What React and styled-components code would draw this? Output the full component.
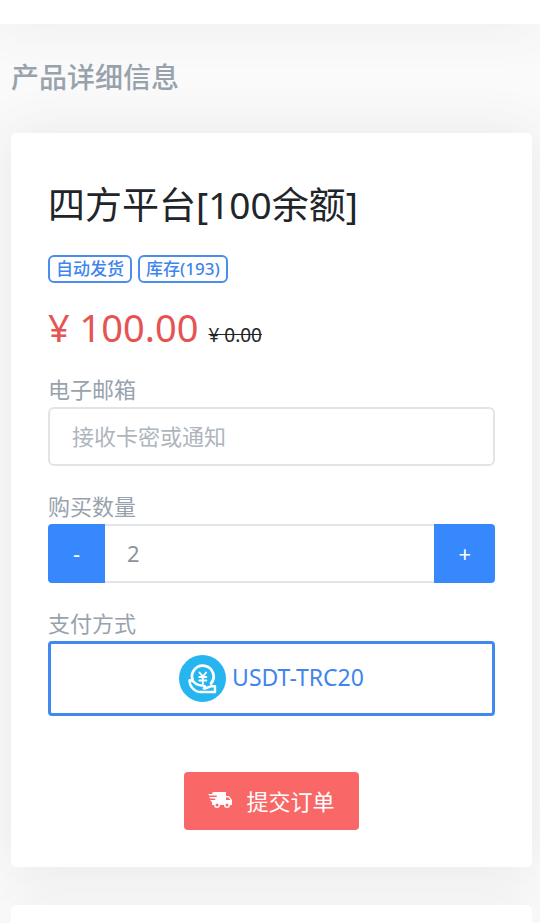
import React, { useState } from "react";
import styled, { createGlobalStyle } from "styled-components";

const GlobalStyle = createGlobalStyle`
  *, *::before, *::after { box-sizing: border-box; }
  body {
    margin: 0;
    background: #fafafa;
    color: #212529;
    font-family: "Noto Sans", "Noto Sans CJK SC", sans-serif;
    font-size: 22px;
    font-weight: 400;
    overflow-x: hidden;
  }
  button, input { font: inherit; }
`;

const shadow = "0 0 50px rgba(84, 84, 84, 0.11)";

const TopBar = styled.header`
  height: 24px;
  background: #fff;
  box-shadow: ${shadow};
`;

const Page = styled.main`
  padding: 0 8px 0 11px;
`;

const PageTitle = styled.h4`
  margin: 0;
  padding-bottom: 2px;
  font-size: 28px;
  font-weight: 500;
  line-height: 107px;
  color: #98a2ad;
`;

const Card = styled.section`
  padding: 37px;
  border-radius: 5px;
  background: #fff;
  box-shadow: ${shadow};
`;

const NextCard = styled.section`
  height: 18px;
  margin-top: 38px;
  border-radius: 5px 5px 0 0;
  background: #fff;
  box-shadow: ${shadow};
`;

const ProductName = styled.h3`
  margin: 13px 0 29px;
  font-size: 37px;
  font-weight: 400;
  line-height: 43px;
`;

const Badges = styled.div`
  display: flex;
  gap: 6px;
`;

const Badge = styled.span`
  padding: 0 6px;
  border: 2px solid #4a8cf0;
  border-radius: 6px;
  font-size: 17px;
  font-weight: 550;
  line-height: 24px;
  color: #3f85ee;
`;

const Prices = styled.div`
  display: flex;
  align-items: baseline;
  gap: 10px;
  margin: 19px 0 12px;
  line-height: 50px;
`;

const Price = styled.span`
  font-size: 38px;
  color: #e55353;
`;

const OldPrice = styled.del`
  font-size: 19px;
`;

const Field = styled.div`
  margin-bottom: 23px;
`;

const Label = styled.label`
  display: block;
  line-height: 35px;
  color: #98a2ad;
`;

const TextInput = styled.input`
  display: block;
  width: 100%;
  min-width: 0;
  height: 59px;
  padding: 0 22px 2px;
  border: 2px solid #e2e4e7;
  border-radius: ${(p) => (p.$joined ? "0" : "6px")};
  border-width: ${(p) => (p.$joined ? "2px 0" : "2px")};
  background: #fff;
  color: #8c9399;
  outline: none;
  &::placeholder { color: #adb5bd; opacity: 1; }
`;

const Stepper = styled.div`
  display: flex;
  border-radius: 4px;
  overflow: hidden;
`;

const StepButton = styled.button`
  flex: none;
  min-width: 57px;
  padding: 0 24px 2px;
  border: 0;
  background: #3688fc;
  color: #fff;
`;

const PayOption = styled.button`
  display: flex;
  align-items: center;
  justify-content: center;
  gap: 6px;
  width: 100%;
  height: 75px;
  padding: 0;
  border: 3px solid #4189ee;
  border-radius: 4px;
  background: #fff;
  font-size: 23px;
  line-height: 32px;
  color: #3f85ee;
`;

const PayName = styled.span`
  padding-bottom: 4px;
`;

const Actions = styled.div`
  display: flex;
  justify-content: center;
  margin-top: 56px;
`;

const SubmitButton = styled.button`
  display: flex;
  align-items: center;
  gap: 14px;
  height: 58px;
  padding: 0 24px 2px;
  border: 0;
  border-radius: 4px;
  background: #fa6767;
  color: #fff;
`;

function CoinHandIcon() {
  return (
    <svg width="47" height="47" viewBox="0 0 47 47" fill="none" aria-hidden="true">
      <circle cx="23.5" cy="23.5" r="23.5" fill="#27b5f0" />
      <path
        d="M13.600 25A10.800 10.800 0 1 1 32 28.500"
        stroke="#fff"
        strokeWidth="2.8"
        strokeLinecap="round"
      />
      <path
        d="M20.500 17.500l3.300 4 3.300-4M20.300 22h7M20.300 25.500h7M23.800 21.500v7.500"
        stroke="#fff"
        strokeWidth="1.9"
        strokeLinecap="round"
      />
      <path
        d="M10.500 25.200c2.500 0 4 1 5.500 2.800 1.800 2 4.500 2.400 8.500 2.800 2.200.300 2.300 2.200.300 2.700M10.500 25.200c-.300 5 4.500 11.800 11 11.800H36V31.200h-3.500L26 33.500"
        stroke="#fff"
        strokeWidth="2.4"
        strokeLinejoin="round"
        strokeLinecap="round"
      />
    </svg>
  );
}

function TruckFastIcon() {
  return (
    <svg width="24" height="24" viewBox="0 0 24 24" fill="currentColor" aria-hidden="true">
      <path d="M3,13.5L2.25,12H7.5L6.9,10.5H2L1.25,9H9.05L8.45,7.5H1.11L0.25,6H4A2,2 0 0,1 6,4H18V8H21L24,12V17H22A3,3 0 0,1 19,20A3,3 0 0,1 16,17H12A3,3 0 0,1 9,20A3,3 0 0,1 6,17H4V13.5H3M19,18.5A1.5,1.5 0 0,0 20.5,17A1.5,1.5 0 0,0 19,15.5A1.5,1.5 0 0,0 17.5,17A1.5,1.5 0 0,0 19,18.5M20.5,9.5H18V12H22.46L20.5,9.5M9,18.5A1.5,1.5 0 0,0 10.5,17A1.5,1.5 0 0,0 9,15.5A1.5,1.5 0 0,0 7.5,17A1.5,1.5 0 0,0 9,18.5Z" />
    </svg>
  );
}

export default function App() {
  const [quantity, setQuantity] = useState(2);
  const step = (n) => setQuantity((q) => Math.max(1, Number(q) + n));

  return (
    <>
      <GlobalStyle />
      <TopBar />
      <Page>
        <PageTitle>产品详细信息</PageTitle>
        <Card as="form" onSubmit={(e) => e.preventDefault()}>
          <ProductName>四方平台[100余额]</ProductName>
          <Badges>
            <Badge>自动发货</Badge>
            <Badge>库存(193)</Badge>
          </Badges>
          <Prices>
            <Price>¥ 100.00</Price>
            <OldPrice>¥ 0.00</OldPrice>
          </Prices>
          <Field>
            <Label htmlFor="email">电子邮箱</Label>
            <TextInput id="email" type="email" placeholder="接收卡密或通知" />
          </Field>
          <Field>
            <Label htmlFor="quantity">购买数量</Label>
            <Stepper>
              <StepButton type="button" onClick={() => step(-1)}>-</StepButton>
              <TextInput
                id="quantity"
                $joined
                inputMode="numeric"
                value={quantity}
                onChange={(e) => setQuantity(e.target.value)}
              />
              <StepButton type="button" onClick={() => step(1)}>+</StepButton>
            </Stepper>
          </Field>
          <Label htmlFor="payment">支付方式</Label>
          <PayOption id="payment" type="button">
            <CoinHandIcon />
            <PayName>USDT-TRC20</PayName>
          </PayOption>
          <Actions>
            <SubmitButton type="submit">
              <TruckFastIcon />
              提交订单
            </SubmitButton>
          </Actions>
        </Card>
        <NextCard />
      </Page>
    </>
  );
}
